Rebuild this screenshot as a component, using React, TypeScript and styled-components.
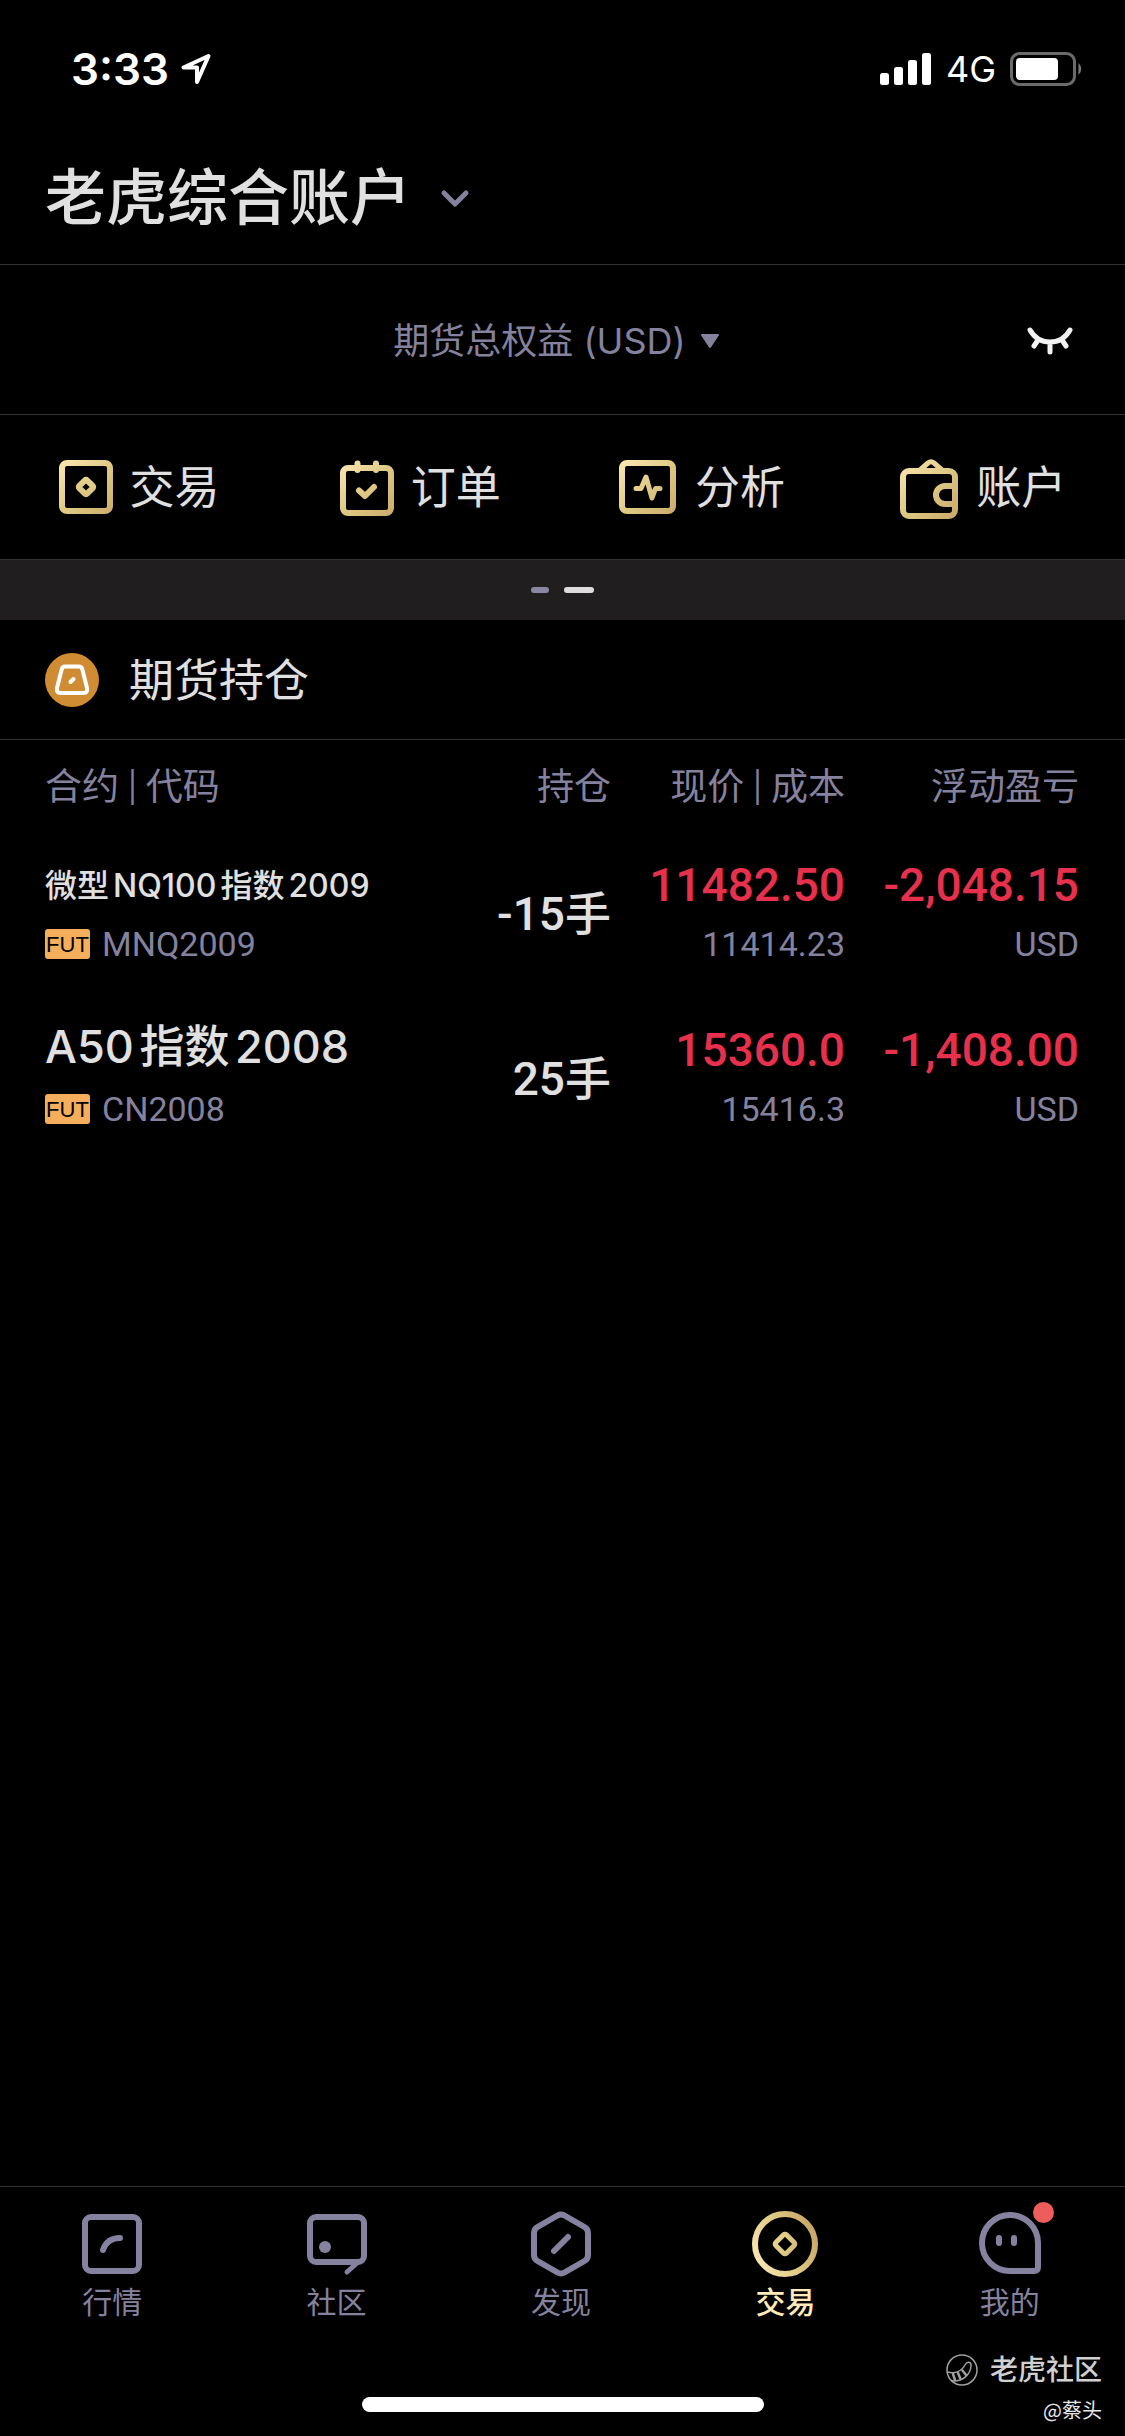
import React from 'react';
import styled, { createGlobalStyle } from 'styled-components';

const colors = {
  text: '#e0e0e0',
  muted: '#84829e',
  line: '#333333',
  band: '#201e1f',
  down: '#e6304c',
  badge: '#f4ae5c',
  gold: '#ffeab8',
};

const sans = `Inter, "Noto Sans CJK SC", sans-serif`;
const numeric = `Roboto, "Noto Sans CJK SC", sans-serif`;

const GlobalStyle = createGlobalStyle`
  *, *::before, *::after { box-sizing: border-box; }
  body { margin: 0; background: #000; color: ${colors.text}; font-family: ${sans}; }
  button { margin: 0; padding: 0; border: 0; background: none; color: inherit; font: inherit; cursor: pointer; }
  svg { display: block; flex: none; overflow: visible; }
`;

const Screen = styled.div`
  display: flex;
  flex-direction: column;
  min-height: 100vh;
`;

const StatusBar = styled.div`
  display: flex;
  align-items: center;
  justify-content: space-between;
  height: 132px;
  padding: 6px 42px 0 71px;
  color: #fff;
`;

const StatusGroup = styled.div<{ $gap: number }>`
  display: flex;
  align-items: center;
  gap: ${(p) => p.$gap}px;
`;

const Clock = styled.span`
  font-size: 44px;
  font-weight: 600;
  line-height: 48px;
`;

const Network = styled.span`
  font-size: 36px;
  line-height: 48px;
`;

const AccountHeader = styled.header`
  display: flex;
  align-items: center;
  height: 133px;
  padding: 0 45px;
  border-bottom: 1px solid ${colors.line};
`;

const AccountButton = styled.button`
  display: flex;
  align-items: center;
  gap: 28px;
`;

const AccountTitle = styled.h1`
  margin: 0;
  font-size: 61px;
  font-weight: 500;
  line-height: 88px;
`;

const EquityBar = styled.section`
  display: grid;
  grid-template-columns: 1fr auto 1fr;
  align-items: center;
  height: 150px;
  padding: 2px 50px 0 38px;
  border-bottom: 1px solid ${colors.line};
`;

const EquityButton = styled.button`
  grid-column: 2;
  display: flex;
  align-items: center;
  gap: 14px;
  color: ${colors.muted};
  font-size: 36px;
  line-height: 54px;
`;

const EyeButton = styled.button`
  justify-self: end;
`;

const Actions = styled.nav`
  display: grid;
  grid-template-columns: repeat(4, 1fr);
  height: 144px;
`;

const Action = styled.button`
  display: flex;
  align-items: center;
  justify-content: center;
  gap: 15px;
  padding-right: 4px;
  font-size: 45px;
  line-height: 66px;
`;

const ActionLabel = styled.span`
  padding-top: 2px;
`;

const Pager = styled.div`
  display: flex;
  align-items: center;
  justify-content: center;
  gap: 15px;
  height: 61px;
  background: ${colors.band};
  border-top: 1px solid ${colors.line};
`;

const PagerMark = styled.span<{ $active?: boolean }>`
  width: ${(p) => (p.$active ? 30 : 18)}px;
  height: 6px;
  border-radius: 3px;
  background: ${(p) => (p.$active ? '#dedcdd' : '#8a87a2')};
`;

const Holdings = styled.main`
  flex: 1;
`;

const HoldingsHeader = styled.div`
  display: flex;
  align-items: center;
  gap: 30px;
  height: 120px;
  padding: 0 45px;
  border-bottom: 1px solid ${colors.line};
`;

const HoldingsTitle = styled.h2`
  margin: 0;
  padding-top: 2px;
  font-size: 45px;
  font-weight: 400;
  line-height: 66px;
`;

const Table = styled.table`
  width: 100%;
  border-collapse: collapse;
  table-layout: fixed;
`;

const Col = styled.col<{ $width: string }>`
  width: ${(p) => p.$width};
`;

const HeadCell = styled.th<{ $start?: boolean }>`
  height: 91px;
  padding: ${(p) => (p.$start ? '2px 0 0 45px' : '2px 0 0')};
  color: ${colors.muted};
  font-size: 37px;
  font-weight: 400;
  line-height: 54px;
  text-align: ${(p) => (p.$start ? 'left' : 'right')};
  white-space: nowrap;
`;

const Pipe = styled.span`
  font-size: 30px;
  vertical-align: 2px;
  white-space: pre;
`;

const Cell = styled.td<{ $start?: boolean }>`
  height: 165px;
  padding: ${(p) => (p.$start ? '0 0 0 45px' : '0')};
  text-align: ${(p) => (p.$start ? 'left' : 'right')};
  vertical-align: middle;
  white-space: nowrap;
`;

const Name = styled.div<{ $compact?: boolean }>`
  height: 60px;
  font-size: ${(p) => (p.$compact ? 32 : 45)}px;
  font-weight: 500;
  line-height: ${(p) => (p.$compact ? 62 : 54)}px;
  text-autospace: normal;
`;

const Value = styled.div<{ $down?: boolean }>`
  color: ${(p) => (p.$down ? colors.down : colors.text)};
  font-family: ${numeric};
  font-size: 46px;
  font-weight: 500;
  line-height: 60px;
`;

const Sub = styled.div`
  color: ${colors.muted};
  font-family: ${numeric};
  font-size: 34px;
  line-height: 58px;
`;

const CodeLine = styled.div`
  display: flex;
  align-items: center;
  gap: 12px;
`;

const Badge = styled.span`
  width: 45px;
  height: 30px;
  border-radius: 3px;
  background: ${colors.badge};
  color: #000;
  font-family: "Liberation Sans", Arial, sans-serif;
  font-size: 22px;
  line-height: 31px;
  text-align: center;
`;

const Footer = styled.footer`
  position: relative;
  display: flex;
  flex-direction: column;
  align-items: center;
  justify-content: space-between;
  height: 250px;
  padding-bottom: 24px;
  border-top: 1px solid ${colors.line};
`;

const Tabs = styled.nav`
  display: grid;
  grid-template-columns: repeat(5, 1fr);
  width: 100%;
  padding: 23px 3px 0 0;
`;

const Tab = styled.button<{ $active?: boolean }>`
  display: flex;
  flex-direction: column;
  align-items: center;
  gap: 2px;
  color: ${(p) => (p.$active ? colors.gold : colors.muted)};
  font-size: 30px;
  font-weight: ${(p) => (p.$active ? 500 : 400)};
  line-height: 44px;
`;

const TabIcon = styled.span`
  position: relative;
`;

const Dot = styled.span`
  position: absolute;
  top: -8px;
  right: -10px;
  width: 21px;
  height: 21px;
  border-radius: 50%;
  background: #ee5d5b;
`;

const HomeIndicator = styled.div`
  width: 402px;
  height: 15px;
  border-radius: 8px;
  background: #fff;
`;

const Watermark = styled.div`
  position: absolute;
  right: 23px;
  bottom: 11px;
  display: flex;
  flex-direction: column;
  align-items: flex-end;
`;

const Brand = styled.div`
  display: flex;
  align-items: center;
  gap: 12px;
  color: #d0d0d0;
  font-size: 28px;
  font-weight: 500;
  line-height: 50px;
`;

const Author = styled.div`
  color: #e8e8e8;
  font-family: "Noto Sans CJK SC", sans-serif;
  font-size: 20px;
  line-height: 30px;
`;

const LocationIcon = () => (
  <svg width="30" height="30" viewBox="0 0 30 30" fill="none" stroke="#fff" strokeWidth="4" strokeLinejoin="round">
    <path d="M27.500 2 L2.500 13.500 H16 V28 Z" />
  </svg>
);

const SignalIcon = () => (
  <svg width="52" height="34" viewBox="0 0 52 34" fill="#fff">
    <rect x="0" y="21" width="9" height="12" rx="2.500" />
    <rect x="14" y="15" width="9" height="18" rx="2.500" />
    <rect x="28" y="8" width="9" height="25" rx="2.500" />
    <rect x="42" y="1" width="9" height="32" rx="2.500" />
  </svg>
);

const BatteryIcon = () => (
  <svg width="73" height="34" viewBox="0 0 73 34">
    <rect x="1.500" y="1.500" width="63" height="31" rx="8" fill="none" stroke="#6b6b6b" strokeWidth="3" />
    <rect x="6" y="6" width="42" height="22" rx="4" fill="#fff" />
    <path d="M68.500 11 a8 8 0 0 1 0 12 Z" fill="#7b7b7b" />
  </svg>
);

const ChevronIcon = () => (
  <svg width="32" height="20" viewBox="0 0 32 20" fill="none" stroke={colors.muted} strokeWidth="5" strokeLinecap="round" strokeLinejoin="round">
    <path d="M5 5 L16 16 L27 5" />
  </svg>
);

const CaretIcon = () => (
  <svg width="20" height="16" viewBox="0 0 20 16" fill={colors.muted} stroke={colors.muted} strokeWidth="2" strokeLinejoin="round">
    <path d="M2 2 H18 L10 14 Z" />
  </svg>
);

const ClosedEyeIcon = () => (
  <svg width="50" height="30" viewBox="0 0 50 30" fill="none" stroke="#f2f2f2" strokeWidth="5" strokeLinecap="round">
    <path d="M5 4 C14 20 36 20 45 4 M25 17 V26 M13 14 L9 20 M37 14 L41 20" />
  </svg>
);

const GoldDefs = ({ id }: { id: string }) => (
  <defs>
    <linearGradient id={id} gradientUnits="userSpaceOnUse" x1="0" y1="0" x2="60" y2="60">
      <stop offset="0" stopColor="#fdebb8" />
      <stop offset="0.5" stopColor="#dfc985" />
      <stop offset="1" stopColor="#c9a768" />
    </linearGradient>
  </defs>
);

const TradeIcon = () => (
  <svg width="57" height="60" viewBox="0 0 57 60" fill="none" stroke="url(#goldTrade)" strokeWidth="6">
    <GoldDefs id="goldTrade" />
    <rect x="4" y="6" width="48" height="48" rx="5" />
    <rect x="22.500" y="24.500" width="11" height="11" rx="1.500" transform="rotate(45 28 30)" />
  </svg>
);

const OrdersIcon = () => (
  <svg width="57" height="60" viewBox="0 0 57 60" fill="none" stroke="url(#goldOrders)" strokeWidth="6" strokeLinecap="round" strokeLinejoin="round">
    <GoldDefs id="goldOrders" />
    <rect x="4" y="11" width="48" height="45" rx="5" />
    <path d="M18.500 6.500 V13 M37 6.500 V13" />
    <path d="M20 33.500 L26 39 L35 30" />
  </svg>
);

const AnalysisIcon = () => (
  <svg width="63" height="60" viewBox="-2 0 63 60" fill="none" stroke="url(#goldAnalysis)" strokeWidth="6" strokeLinecap="round" strokeLinejoin="round">
    <GoldDefs id="goldAnalysis" />
    <rect x="3" y="6" width="51" height="48" rx="5" />
    <path strokeWidth="5" d="M17 31.500 H22 L27 20 L33 41 L36.500 31.500 H41" />
  </svg>
);

const WalletIcon = () => (
  <svg width="63" height="60" viewBox="-2 0 63 60" fill="none" stroke="url(#goldWallet)" strokeWidth="6" strokeLinecap="round" strokeLinejoin="round">
    <GoldDefs id="goldWallet" />
    <rect x="3" y="14" width="52" height="45" rx="6" />
    <path strokeWidth="5" d="M20 13 L28 6 Q31 3.500 34 6 L42 13" />
    <path strokeLinecap="butt" d="M53 29 H45 A9 9 0 0 0 45 47 H53" />
  </svg>
);

const FuturesIcon = () => (
  <svg width="54" height="54" viewBox="0 0 54 54" fill="none" stroke="#fff" strokeWidth="4" strokeLinecap="round" strokeLinejoin="round">
    <circle cx="27" cy="27" r="27" fill="#d08c33" stroke="none" />
    <path d="M20 13.500 H34 Q36.500 13.500 37.200 16 L42 35 Q42.800 40 38.500 40 H15.500 Q11.200 40 12 35 L16.800 16 Q17.500 13.500 20 13.500 Z" />
    <path d="M25.500 29 L28.500 26" />
  </svg>
);

const MarketIcon = () => (
  <svg width="68" height="68" viewBox="0 0 68 68" fill="none" stroke="currentColor" strokeWidth="6" strokeLinecap="round">
    <rect x="7" y="7" width="54" height="54" rx="6" />
    <path d="M25 40 Q29 28 42 28" />
  </svg>
);

const CommunityIcon = () => (
  <svg width="68" height="68" viewBox="0 0 68 68" fill="none" stroke="currentColor" strokeWidth="6" strokeLinecap="round">
    <rect x="7" y="7" width="54" height="45" rx="6" />
    <path strokeWidth="5" d="M54 53 L44 62" />
    <circle cx="22" cy="37" r="6" fill="currentColor" stroke="none" />
  </svg>
);

const DiscoverIcon = () => (
  <svg width="68" height="68" viewBox="0 0 68 68" fill="none" stroke="currentColor" strokeWidth="6" strokeLinecap="round" strokeLinejoin="round">
    <path d="M30.500 5.500 Q34 3.500 37.500 5.500 L57.500 17 Q61 19 61 23 V45 Q61 49 57.500 51 L37.500 62.500 Q34 64.500 30.500 62.500 L10.500 51 Q7 49 7 45 V23 Q7 19 10.500 17 Z" />
    <path d="M27 41 L41 27" />
  </svg>
);

const TradeTabIcon = () => (
  <svg width="68" height="68" viewBox="0 0 68 68" fill="none" stroke="url(#goldTab)" strokeWidth="6">
    <defs>
      <linearGradient id="goldTab" gradientUnits="userSpaceOnUse" x1="4" y1="50" x2="64" y2="22">
        <stop offset="0" stopColor="#f9e6b2" />
        <stop offset="0.5" stopColor="#e0ca84" />
        <stop offset="1" stopColor="#c9a768" />
      </linearGradient>
    </defs>
    <circle cx="34" cy="34" r="30" />
    <rect x="26.500" y="26.500" width="15" height="15" rx="2" strokeWidth="5" transform="rotate(45 34 34)" />
  </svg>
);

const MineIcon = () => (
  <svg width="68" height="68" viewBox="0 0 68 68" fill="none" stroke="currentColor" strokeWidth="6" strokeLinecap="round">
    <path d="M34 5 A28 28 0 0 1 62 33 V57 Q62 61 58 61 H34 A28 28 0 0 1 34 5 Z" />
    <path d="M23 28 V33 M38 28 V33" />
  </svg>
);

const TigerMark = () => (
  <svg width="32" height="32" viewBox="0 0 32 32" fill="none" stroke="#a0a0a0" strokeWidth="1.500" strokeLinecap="round">
    <circle cx="16" cy="16" r="15" />
    <path d="M1.500 18 C8 20 15 18 19 11 C21 7 25.500 7.500 25 12 C24.500 20 17 28 6 27" />
    <path strokeWidth="2.500" d="M7 20 L9 26 M12 19 L14.500 25 M16.500 16.500 L20 21" />
  </svg>
);

const actions = [
  { label: '交易', Icon: TradeIcon },
  { label: '订单', Icon: OrdersIcon },
  { label: '分析', Icon: AnalysisIcon },
  { label: '账户', Icon: WalletIcon },
];

const positions = [
  { name: '微型NQ100指数2009', compact: true, code: 'MNQ2009', lots: '-15手', price: '11482.50', cost: '11414.23', profit: '-2,048.15' },
  { name: 'A50指数2008', compact: false, code: 'CN2008', lots: '25手', price: '15360.0', cost: '15416.3', profit: '-1,408.00' },
];

const tabs = [
  { label: '行情', Icon: MarketIcon },
  { label: '社区', Icon: CommunityIcon },
  { label: '发现', Icon: DiscoverIcon },
  { label: '交易', Icon: TradeTabIcon, active: true },
  { label: '我的', Icon: MineIcon, unread: true },
];

export default function App() {
  return (
    <Screen>
      <GlobalStyle />
      <StatusBar>
        <StatusGroup $gap={12}>
          <Clock>3:33</Clock>
          <LocationIcon />
        </StatusGroup>
        <StatusGroup $gap={14}>
          <SignalIcon />
          <Network>4G</Network>
          <BatteryIcon />
        </StatusGroup>
      </StatusBar>

      <AccountHeader>
        <AccountButton>
          <AccountTitle>老虎综合账户</AccountTitle>
          <ChevronIcon />
        </AccountButton>
      </AccountHeader>

      <EquityBar>
        <EquityButton>
          期货总权益 (USD)
          <CaretIcon />
        </EquityButton>
        <EyeButton aria-label="显示金额">
          <ClosedEyeIcon />
        </EyeButton>
      </EquityBar>

      <Actions>
        {actions.map(({ label, Icon }) => (
          <Action key={label}>
            <Icon />
            <ActionLabel>{label}</ActionLabel>
          </Action>
        ))}
      </Actions>

      <Pager>
        <PagerMark />
        <PagerMark $active />
      </Pager>

      <Holdings>
        <HoldingsHeader>
          <FuturesIcon />
          <HoldingsTitle>期货持仓</HoldingsTitle>
        </HoldingsHeader>
        <Table>
          <colgroup>
            <Col $width="38%" />
            <Col $width="auto" />
            <Col $width="234px" />
            <Col $width="234px" />
            <Col $width="46px" />
          </colgroup>
          <thead>
            <tr>
              <HeadCell $start>
                合约<Pipe> | </Pipe>代码
              </HeadCell>
              <HeadCell>持仓</HeadCell>
              <HeadCell>
                现价<Pipe> | </Pipe>成本
              </HeadCell>
              <HeadCell>浮动盈亏</HeadCell>
              <HeadCell as="td" />
            </tr>
          </thead>
          <tbody>
            {positions.map((p) => (
              <tr key={p.code}>
                <Cell $start>
                  <Name $compact={p.compact}>{p.name}</Name>
                  <CodeLine>
                    <Badge>FUT</Badge>
                    <Sub>{p.code}</Sub>
                  </CodeLine>
                </Cell>
                <Cell>
                  <Value>{p.lots}</Value>
                </Cell>
                <Cell>
                  <Value $down>{p.price}</Value>
                  <Sub>{p.cost}</Sub>
                </Cell>
                <Cell>
                  <Value $down>{p.profit}</Value>
                  <Sub>USD</Sub>
                </Cell>
                <Cell />
              </tr>
            ))}
          </tbody>
        </Table>
      </Holdings>

      <Footer>
        <Tabs>
          {tabs.map(({ label, Icon, active, unread }) => (
            <Tab key={label} $active={active}>
              <TabIcon>
                <Icon />
                {unread && <Dot />}
              </TabIcon>
              {label}
            </Tab>
          ))}
        </Tabs>
        <HomeIndicator />
        <Watermark>
          <Brand>
            <TigerMark />
            老虎社区
          </Brand>
          <Author>@蔡头</Author>
        </Watermark>
      </Footer>
    </Screen>
  );
}
